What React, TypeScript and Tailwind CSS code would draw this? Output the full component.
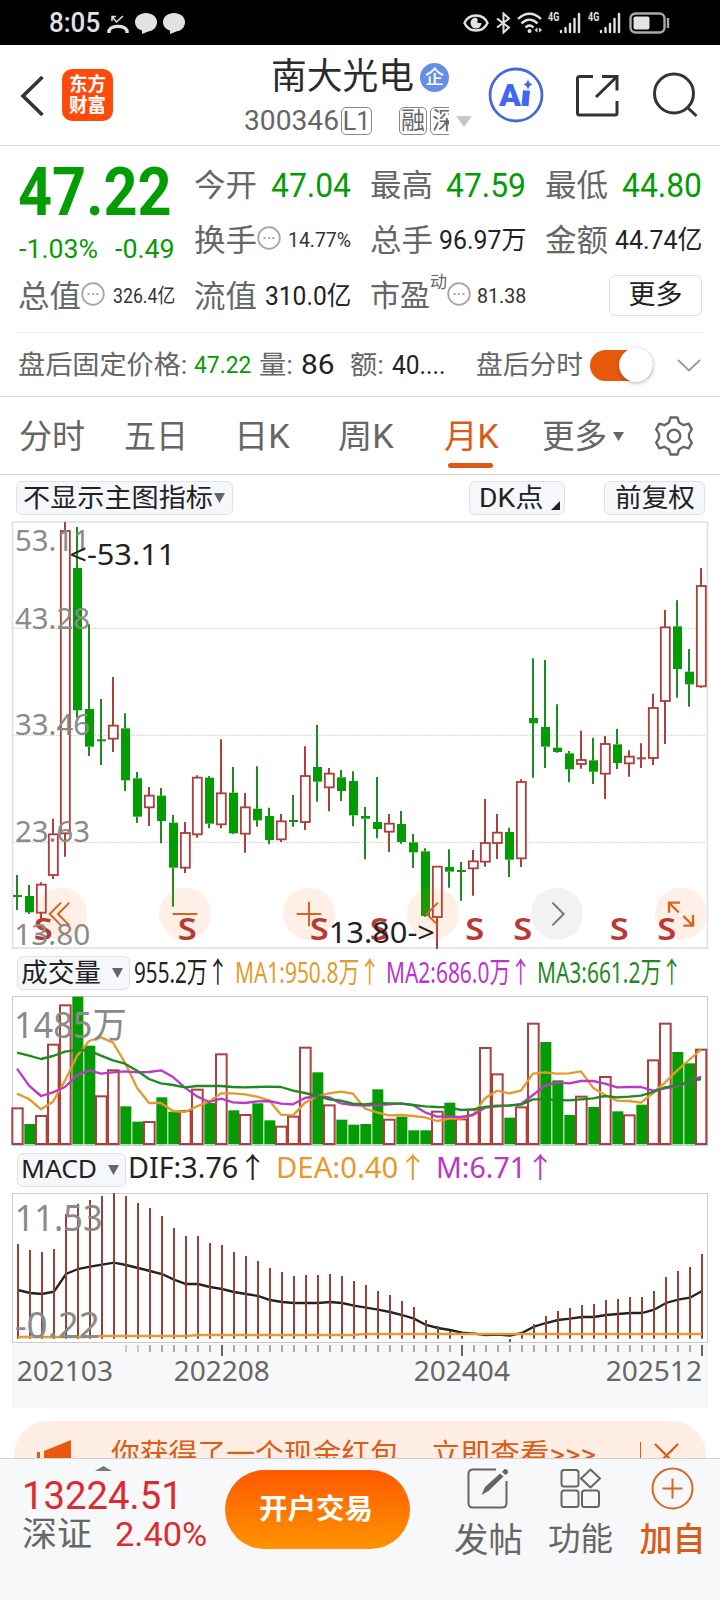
import { ReactNode, useLayoutEffect, useRef } from 'react';
import clsx from 'clsx';

type Tone = 'r' | 'g';
type Candle = [Tone, number, number, number, number];
type Volume = [Tone, number];

const RED = '#ac403c';
const GREEN = '#049c04';

// tone, high, body top, body bottom, low
const candles: Candle[] = [
  ['g', 1095, 1157, 1160, 1200], ['g', 1125, 1158, 1207, 1212], ['r', 1117, 1124, 1208, 1228], ['r', 926, 973, 1095, 1107],
  ['r', 36, 63, 970, 1040], ['g', 51, 174, 601, 623], ['g', 343, 597, 710, 738], ['g', 567, 690, 692, 765],
  ['r', 501, 647, 686, 726], ['g', 610, 655, 811, 843], ['g', 786, 805, 920, 939], ['r', 831, 857, 892, 948],
  ['g', 834, 857, 933, 1000], ['g', 915, 938, 1073, 1190], ['r', 936, 969, 1073, 1089], ['r', 796, 803, 973, 983],
  ['g', 798, 803, 941, 955], ['r', 688, 850, 943, 955], ['g', 771, 848, 970, 972], ['r', 849, 892, 971, 1028],
  ['g', 769, 896, 931, 950], ['g', 893, 918, 990, 1003], ['r', 912, 934, 988, 996], ['g', 855, 932, 934, 950],
  ['r', 709, 798, 936, 960], ['g', 645, 771, 815, 875], ['r', 774, 791, 832, 904], ['g', 780, 802, 843, 873],
  ['g', 784, 813, 916, 949], ['g', 891, 918, 926, 1048], ['g', 801, 936, 957, 985], ['r', 912, 941, 965, 1026],
  ['g', 903, 942, 996, 1001], ['g', 972, 997, 1027, 1074], ['g', 1015, 1024, 1218, 1220], ['r', 1068, 1070, 1221, 1317],
  ['g', 1018, 1071, 1085, 1133], ['g', 1056, 1082, 1084, 1172], ['r', 1020, 1054, 1075, 1157], ['r', 867, 999, 1055, 1070],
  ['r', 912, 968, 999, 1047], ['g', 953, 966, 1049, 1101], ['r', 808, 816, 1045, 1071], ['g', 445, 624, 640, 803],
  ['g', 450, 651, 710, 774], ['g', 583, 713, 726, 728], ['g', 723, 730, 778, 817], ['r', 662, 750, 762, 776],
  ['g', 683, 751, 785, 822], ['r', 678, 702, 791, 867], ['g', 657, 703, 759, 777], ['r', 721, 740, 760, 800],
  ['r', 700, 744, 745, 774], ['r', 551, 594, 744, 765], ['r', 300, 352, 573, 702], ['g', 271, 349, 477, 563],
  ['g', 417, 485, 523, 590], ['r', 174, 228, 529, 533],
];

const volumes: Volume[] = [
  ['r', 487], ['g', 537], ['r', 510], ['r', 296], ['r', 178], ['g', 155], ['g', 302], ['r', 451], ['r', 373], ['g', 484],
  ['g', 530], ['r', 528], ['g', 457], ['g', 500], ['r', 495], ['r', 431], ['g', 474], ['r', 325], ['g', 496], ['r', 507],
  ['g', 475], ['g', 526], ['r', 542], ['r', 512], ['r', 305], ['g', 382], ['r', 478], ['g', 524], ['g', 539], ['g', 537],
  ['g', 433], ['r', 521], ['g', 515], ['g', 556], ['g', 556], ['r', 497], ['g', 473], ['r', 520], ['r', 491], ['r', 306],
  ['r', 385], ['g', 518], ['r', 484], ['r', 233], ['g', 291], ['g', 406], ['g', 510], ['r', 452], ['g', 486], ['r', 393],
  ['g', 499], ['r', 508], ['g', 479], ['r', 343], ['r', 233], ['g', 321], ['g', 355], ['r', 311],
];

const ma1 = [446, 462, 493, 470, 407, 333, 288, 277, 293, 353, 428, 474, 474, 498, 501, 484, 470, 445, 445, 448, 455, 466, 509, 511, 473, 454, 445, 440, 446, 491, 502, 511, 510, 513, 517, 528, 521, 521, 509, 460, 437, 445, 437, 386, 382, 386, 385, 379, 428, 450, 467, 468, 473, 444, 413, 377, 345, 314];
const ma2 = [371, 422, 453, 442, 426, 391, 376, 386, 382, 379, 382, 381, 376, 396, 428, 454, 471, 461, 472, 474, 469, 468, 476, 478, 459, 453, 457, 475, 480, 482, 480, 478, 475, 480, 502, 515, 515, 516, 510, 488, 484, 482, 477, 450, 422, 412, 415, 408, 408, 416, 427, 426, 426, 437, 430, 424, 412, 395];
const ma3 = [323, 332, 342, 333, 320, 315, 317, 332, 346, 356, 377, 402, 415, 420, 427, 423, 423, 423, 426, 427, 426, 425, 426, 437, 444, 453, 463, 467, 476, 478, 474, 475, 476, 480, 484, 486, 487, 495, 493, 486, 482, 481, 479, 463, 463, 465, 466, 463, 460, 453, 457, 455, 452, 441, 427, 421, 410, 402];
const macd = [192, 210, 216, 207, 102, 71, 60, 48, 39, 48, 69, 84, 108, 144, 168, 168, 189, 195, 216, 228, 243, 264, 276, 288, 285, 285, 282, 288, 303, 315, 333, 345, 363, 381, 420, 438, 453, 468, 0, 0, 0, 0, 462, 432, 408, 393, 384, 375, 372, 360, 357, 351, 351, 333, 291, 273, 261, 222];
const dif = [330, 339, 342, 335, 282, 267, 260, 254, 248, 255, 264, 273, 282, 299, 312, 312, 321, 327, 336, 342, 348, 360, 366, 369, 369, 369, 366, 369, 377, 383, 389, 396, 405, 416, 435, 444, 450, 458, 461, 465, 464, 467, 459, 440, 429, 420, 416, 411, 411, 405, 402, 399, 399, 389, 369, 359, 353, 333];

const toPoints = (values: number[], start: number) => values.map((y, i) => `${start + i * 36},${y}`).join(' ');

// Squeezes or stretches one line of text to the width given by its class
function Fit({ className, children }: { className?: string; children: ReactNode }) {
  const outer = useRef<HTMLSpanElement>(null);
  const inner = useRef<HTMLSpanElement>(null);

  useLayoutEffect(() => {
    if (!outer.current || !inner.current) return;
    const ratio = outer.current.clientWidth / inner.current.offsetWidth;
    inner.current.style.transform = `scaleX(${ratio})`;
  }, [children]);

  return (
    <span ref={outer} className={clsx('block shrink-0 leading-none', className)}>
      <span ref={inner} className="inline-block origin-left whitespace-nowrap">{children}</span>
    </span>
  );
}

function ChartText({ x, end, y, size, fill = '#8a8a8a', children }: { x: number; end: number; y: number; size: number; fill?: string; children: string }) {
  return (
    <text x={x} y={y} textLength={end - x} lengthAdjust="spacingAndGlyphs" fontSize={size} fill={fill}>
      {children}
    </text>
  );
}

function Signal() {
  return (
    <svg className="h-[22px] w-[22px]" viewBox="0 0 22 22" stroke="#e2e2e2" strokeWidth="2.4" strokeLinecap="round">
      <path d="M2 19v1M6.5 16v4M11 12v8M15.500 7v13M20 2v18" />
    </svg>
  );
}

function StatusBar() {
  return (
    <div className="flex h-[45px] items-center bg-black pl-[49px] pr-[50px] text-[#e2e2e2]">
      <Fit className="mt-px w-[51px] text-[27px] font-medium">8:05</Fit>
      <svg className="ml-[7px] mt-[3px] h-[19px] w-[22px]" viewBox="0 0 22 19" fill="none" stroke="#e2e2e2" strokeWidth="2">
        <path d="M5 1.500 9.500 7 16 1M5 6V1.500h4" strokeWidth="1.500" />
        <path d="M2 18v-2.500C5 10 17 10 20 15.500V18" strokeWidth="3.400" />
      </svg>
      {[0, 1].map(i => (
        <svg key={i} className="ml-[6px] mt-px h-[21px] w-[22px]" viewBox="0 0 22 21" fill="#e2e2e2">
          <path d="M11 0c6 0 11 3.800 11 9s-4 9-8 9.200L7 21v-3.500C3 16.500 0 13 0 9 0 3.800 5 0 11 0Z" />
        </svg>
      ))}
      <svg className="ml-auto mt-px h-[20px] w-[26px]" viewBox="0 0 26 20" fill="none" stroke="#e2e2e2" strokeWidth="2.400">
        <path d="M1.500 10C6 0 20 0 24.500 10 20 20 6 20 1.500 10Z" />
        <path d="M13 4.500a5.500 5.500 0 1 0 5.500 5.500h-4V6Z" fill="#e2e2e2" stroke="none" />
      </svg>
      <svg className="ml-[7px] h-[22px] w-[15px]" viewBox="0 0 15 22" fill="none" stroke="#e2e2e2" strokeWidth="2">
        <path d="M1 6.500 13 15.500 7.500 20.500V1.500L13 6.500 1 15.500" />
      </svg>
      <svg className="ml-[6px] h-[22px] w-[26px]" viewBox="0 0 26 22" fill="none" stroke="#e2e2e2" strokeWidth="2.400">
        <path d="M1 7C8 0 17 0 24 7M4.500 11.500c5-5 11-5 16 0M8.500 15.500c2.500-2.500 5.500-2.500 8 0" />
        <circle cx="12.500" cy="19" r="2" fill="#e2e2e2" stroke="none" />
        <path d="M20.500 15.500v5l-3-2.500ZM22 15.500v5l3-2.500Z" fill="#e2e2e2" stroke="none" />
      </svg>
      <Fit className="mb-[12px] ml-[5px] w-[11px] text-[13px] font-bold">4G</Fit>
      <Signal />
      <Fit className="mb-[12px] ml-[7px] w-[11px] text-[13px] font-bold">4G</Fit>
      <Signal />
      <svg className="ml-[8px] h-[22px] w-[41px]" viewBox="0 0 41 22" fill="none" stroke="#a9a9a9" strokeWidth="2.400">
        <rect x="1.500" y="1.500" width="34" height="19" rx="5" />
        <rect x="4.500" y="4.500" width="16" height="13" rx="2" fill="#e2e2e2" stroke="none" />
        <path d="M39 6v10" />
      </svg>
    </div>
  );
}

function Header() {
  return (
    <div className="flex h-[101px] border-b border-[#d9d9d9] bg-white">
      <svg className="ml-[19px] mt-[30px] h-[42px] w-[26px]" viewBox="0 0 26 42" fill="none" stroke="#333" strokeWidth="3.600">
        <path d="M23.500 2 4 21l19.500 19" />
      </svg>
      <div className="ml-[17px] mt-[24px] flex h-[52px] w-[51px] flex-col items-center justify-center gap-[2px] rounded-[10px] bg-[#ff4a0a] text-[19px] font-bold text-white">
        <Fit className="w-[37px]">东方</Fit>
        <Fit className="w-[37px]">财富</Fit>
      </div>
      <div className="ml-[131px] w-[228px]">
        <div className="mt-[12px] flex h-[40px] items-center pl-[27px]">
          <Fit className="w-[143px] text-[36px] text-[#2b2b2b]">南大光电</Fit>
          <span className="ml-[6px] mt-px flex h-[29px] w-[29px] items-center justify-center rounded-full bg-[#658fe4] text-[19px] font-medium leading-none text-white">企</span>
        </div>
        <div className="mt-[8px] flex h-[32px] items-center text-[#666]">
          <Fit className="w-[95px] text-[27px]">300346</Fit>
          <span className="ml-[2px] flex h-[28px] w-[31px] items-center justify-center rounded-[5px] border border-[#888] text-[25px] leading-none">L1</span>
          <span className="ml-[27px] flex w-[50px] gap-[3px] overflow-hidden text-[24px] leading-none">
            <span className="flex h-[28px] w-[28px] shrink-0 items-center justify-center rounded-[5px] border border-[#888]">融</span>
            <span className="flex h-[28px] w-[28px] shrink-0 items-center justify-center rounded-[5px] border border-[#888]">深</span>
          </span>
          <svg className="ml-[7px] h-[11px] w-[16px] shrink-0" viewBox="0 0 16 11" fill="#c8c8c8"><path d="M0 0h16L8 11Z" /></svg>
        </div>
      </div>
      <svg className="ml-[16px] mt-[22px] h-[56px] w-[56px]" viewBox="0 0 56 56">
        <circle cx="28" cy="28" r="26" fill="#fff" stroke="#4668dc" strokeWidth="2.800" />
        <text x="11" y="39" fontSize="32" fontWeight="900" fill="#3f66f5" textLength="22" lengthAdjust="spacingAndGlyphs">A</text>
        <path d="M38.500 23.500 37 39" stroke="#3f66f5" strokeWidth="7" />
        <path d="M40 12q.8 4.500 4.500 5.500-3.700 1-4.500 5.500-.8-4.500-4.500-5.500 3.700-1 4.500-5.500Z" fill="#3f66f5" />
      </svg>
      <svg className="ml-[29px] mt-[28px] h-[46px] w-[46px]" viewBox="0 0 46 46" fill="none" stroke="#333" strokeWidth="3">
        <path d="M20 3.500H6.500q-2 0-2 2V40q0 2 2 2H42q2 0 2-2V28M23 24 43.500 4M29 3.500h15v14" />
      </svg>
      <svg className="ml-[33px] mt-[27px] h-[46px] w-[48px]" viewBox="0 0 48 46" fill="none" stroke="#333" strokeWidth="3">
        <circle cx="22" cy="21.500" r="19.500" />
        <path d="M35 35l9.500 9" />
      </svg>
    </div>
  );
}

function Info() {
  return (
    <svg className="mb-[5px] h-[24px] w-[24px] shrink-0" viewBox="0 0 24 24" fill="none" stroke="#a6a6a6" strokeWidth="1.800">
      <circle cx="12" cy="12" r="10.800" />
      <path d="M6.500 12h2M11 12h2M15.500 12h2" strokeWidth="2.200" />
    </svg>
  );
}

function Label({ children }: { children: string }) {
  return <Fit className="w-[63px] text-[31px] text-[#666]">{children}</Fit>;
}

function Quote() {
  return (
    <div className="bg-white px-[18px]">
      <div className="flex h-[186px] gap-[19px] pt-[9px]">
        <div className="flex w-[157px] flex-col text-[#049c04]">
          <div className="flex h-[75px] items-center pt-px">
            <Fit className="w-[154px] text-[66px] font-bold">47.22</Fit>
          </div>
          <div className="mt-[-1px] flex h-[40px] items-center justify-between text-[25px]">
            <Fit className="ml-px w-[79px]">-1.03%</Fit>
            <Fit className="w-[60px]">-0.49</Fit>
          </div>
          <div className="mt-px flex h-[52px] items-center">
            <Label>总值</Label>
            <Info />
            <Fit className="ml-auto w-[62px] text-[20px] text-[#333]">326.4亿</Fit>
          </div>
        </div>
        <div className="flex w-[157px] flex-col">
          <div className="flex h-[60px] items-center justify-between">
            <Label>今开</Label>
            <Fit className="w-[80px] text-[33px] text-[#049c04]">47.04</Fit>
          </div>
          <div className="flex h-[50px] items-center">
            <Label>换手</Label>
            <Info />
            <Fit className="ml-auto w-[63px] text-[20px] text-[#333]">14.77%</Fit>
          </div>
          <div className="mt-[5px] flex h-[52px] items-center justify-between">
            <Label>流值</Label>
            <Fit className="w-[86px] text-[26px] text-[#222]">310.0亿</Fit>
          </div>
        </div>
        <div className="flex w-[156px] flex-col">
          <div className="flex h-[60px] items-center justify-between">
            <Label>最高</Label>
            <Fit className="w-[80px] text-[33px] text-[#049c04]">47.59</Fit>
          </div>
          <div className="flex h-[50px] items-center justify-between">
            <Label>总手</Label>
            <Fit className="w-[87px] text-[26px] text-[#222]">96.97万</Fit>
          </div>
          <div className="mt-[5px] flex h-[52px] items-center">
            <Fit className="w-[60px] text-[30px] text-[#666]">市盈</Fit>
            <Fit className="mb-[28px] w-[17px] text-[17px] text-[#666]">动</Fit>
            <Info />
            <Fit className="ml-auto w-[49px] text-[20px] text-[#333]">81.38</Fit>
          </div>
        </div>
        <div className="flex w-[157px] flex-col">
          <div className="flex h-[60px] items-center justify-between">
            <Label>最低</Label>
            <Fit className="w-[80px] text-[33px] text-[#049c04]">44.80</Fit>
          </div>
          <div className="flex h-[50px] items-center justify-between">
            <Label>金额</Label>
            <Fit className="w-[87px] text-[26px] text-[#222]">44.74亿</Fit>
          </div>
          <div className="mt-[10px] flex h-[41px] w-[93px] items-center justify-center self-end rounded-[6px] border border-[#ddd]">
            <Fit className="w-[54px] text-[27px] text-[#222]">更多</Fit>
          </div>
        </div>
      </div>
      <div className="flex h-[64px] items-center border-t border-[#ebebeb] pt-px text-[#666]">
        <Fit className="w-[169px] text-[26.500px]">盘后固定价格:</Fit>
        <Fit className="ml-[7px] w-[57px] text-[24px] text-[#049c04]">47.22</Fit>
        <Fit className="ml-[8px] w-[34px] text-[26.500px]">量:</Fit>
        <Fit className="ml-[8px] w-[33px] text-[28px] text-[#222]">86</Fit>
        <Fit className="ml-[16px] w-[34px] text-[26.500px]">额:</Fit>
        <Fit className="ml-[8px] w-[53px] text-[25px] text-[#222]">40....</Fit>
        <Fit className="ml-auto w-[107px] text-[26.500px]">盘后分时</Fit>
        <div className="ml-[7px] flex h-[31px] w-[63px] items-center justify-end rounded-full bg-[#e8590c]">
          <div className="h-[34px] w-[34px] shrink-0 rounded-full bg-white shadow-[0_1px_4px_rgba(0,0,0,0.3)]" />
        </div>
        <svg className="ml-[24px] mr-[1px] h-[13px] w-[24px]" viewBox="0 0 24 13" fill="none" stroke="#999" strokeWidth="1.800"><path d="M1 1l11 10.500L23 1" /></svg>
      </div>
    </div>
  );
}

function Tabs() {
  return (
    <div className="flex h-[79px] items-center border-y border-[#d9d9d9] bg-white pl-[19px] pt-[2px] text-[33px] text-[#666]">
      <Fit className="w-[66px]">分时</Fit>
      <Fit className="ml-[39px] w-[64px]">五日</Fit>
      <Fit className="ml-[46px] w-[56px]">日K</Fit>
      <Fit className="ml-[48px] w-[56px]">周K</Fit>
      <div className="relative ml-[50px] text-[#dc5a14]">
        <Fit className="w-[55px]">月K</Fit>
        <span className="absolute -bottom-[15px] left-[4px] h-[5px] w-[45px] rounded-full bg-[#dc5a14]" />
      </div>
      <Fit className="ml-[43px] w-[65px]">更多</Fit>
      <svg className="ml-[6px] h-[9px] w-[11px]" viewBox="0 0 11 9" fill="#666"><path d="M0 0h11L5.500 9Z" /></svg>
      <svg className="mb-[2px] ml-[30px] h-[40px] w-[40px]" viewBox="0 0 40 40" fill="none" stroke="#666" strokeWidth="2.400" strokeLinejoin="round">
        <path d="M16.500 1.500h7l1.500 5 4.600 2.700 5-1.600 3.200 5.800-2.800 4.600v4l2.800 4.600-3.200 5.800-5-1.600-4.600 2.700-1.500 5h-7l-1.500-5-4.600-2.700-5 1.600-3.200-5.800L5 22v-4l-2.800-4.600 3.200-5.800 5 1.600 4.600-2.700Z" />
        <circle cx="20" cy="20" r="6.300" />
      </svg>
    </div>
  );
}

function Toolbar() {
  return (
    <div className="flex h-[46px] items-start bg-white pl-[16px] pt-[6px] text-[26px] text-[#222]">
      <div className="flex h-[34px] w-[217px] items-center rounded-[6px] border border-[#dfe2e6] bg-[#f6f7fa] pl-[6px]">
        <Fit className="w-[190px]">不显示主图指标</Fit>
        <svg className="ml-[1px] h-[10px] w-[11px]" viewBox="0 0 11 10" fill="#666"><path d="M0 0h11L5.500 10Z" /></svg>
      </div>
      <div className="ml-[236px] flex h-[34px] w-[96px] items-center rounded-[6px] border border-[#dfe2e6] bg-[#f6f7fa] pl-[9px]">
        <Fit className="w-[64px]">DK点</Fit>
        <svg className="ml-[8px] mt-[14px] h-[9px] w-[9px]" viewBox="0 0 9 9" fill="#222"><path d="M9 0v9H0Z" /></svg>
      </div>
      <div className="ml-[39px] flex h-[34px] w-[101px] items-center justify-center rounded-[6px] border border-[#dfe2e6] bg-[#f6f7fa]">
        <Fit className="w-[80px]">前复权</Fit>
      </div>
    </div>
  );
}

function PriceChart() {
  return (
    <svg className="block h-[429px] w-[720px] font-['Noto_Sans','Noto_Sans_CJK_SC',sans-serif]" viewBox="0 33 2160 1287">
      <rect x="37.500" y="36" width="2085" height="1278" fill="#fff" stroke="#e2e2e2" strokeWidth="5" />
      {[355, 676, 997].map(y => (
        <path key={y} d={`M40 ${y}H2120`} stroke="#ccc" strokeWidth="3" strokeDasharray="5 4" />
      ))}
      {candles.map(([tone, high, top, bottom, low], i) => {
        const x = 51 + i * 36;
        const color = tone === 'r' ? RED : '#1f8a1f';
        return (
          <g key={i}>
            <path d={`M${x} ${high}V${top}M${x} ${bottom}V${low}`} stroke={color} strokeWidth="6" />
            {bottom - top < 4 ? (
              <path d={`M${x - 12} ${top + 1}H${x + 15}`} stroke={color} strokeWidth="6" />
            ) : tone === 'r' ? (
              <rect x={x - 12.500} y={top} width="27" height={bottom - top} fill="#fff" stroke={RED} strokeWidth="5.500" />
            ) : (
              <rect x={x - 12} y={top} width="27" height={bottom - top} fill={GREEN} />
            )}
          </g>
        );
      })}

      {[183, 555, 927, 1299, 1671, 2043].map(x => (
        <circle key={x} cx={x} cy="1211" r="78" fill={x === 1671 ? '#888' : '#ff6a20'} fillOpacity="0.110" />
      ))}
      <g fill="none" stroke="#d9641f" strokeWidth="6">
        <path d="M183 1178l-34 34 34 34M208 1178l-34 34 34 34" />
        <path d="M518 1212h74M890 1212h74M927 1175v74" />
        <path d="M1314 1178l-34 34 34 34" />
        <path d="M2040 1178h-33v30M2008 1179l28 28M2050 1247h29v-32M2078 1246l-28-28" strokeWidth="7" />
      </g>
      <path d="M1657 1178l34 34-34 34" fill="none" stroke="#777" strokeWidth="6" />

      <g fontSize="93" fontWeight="600" fill="#b93a35">
        {[129, 561, 957, 1137, 1424, 1568, 1857, 2000].map(x => (
          <text key={x} x={x - 28} y="1289" textLength="57" lengthAdjust="spacingAndGlyphs">S</text>
        ))}
      </g>
      <ChartText x={45} end={270} y={123} size={87}>53.11</ChartText>
      <ChartText x={45} end={270} y={356} size={87}>43.28</ChartText>
      <ChartText x={45} end={270} y={675} size={87}>33.46</ChartText>
      <ChartText x={45} end={270} y={996} size={87}>23.63</ChartText>
      <ChartText x={43} end={271} y={1304} size={87}>13.80</ChartText>
      <ChartText x={208} end={526} y={165} size={87} fill="#222">{'<-53.11'}</ChartText>
      <ChartText x={986} end={1305} y={1299} size={87} fill="#222">{'13.80->'}</ChartText>
    </svg>
  );
}

function VolumeChart() {
  return (
    <svg className="block h-[150px] w-[720px] font-['Noto_Sans','Noto_Sans_CJK_SC',sans-serif]" viewBox="0 153 2160 450">
      <rect x="37.500" y="154.500" width="2085" height="447" fill="#fff" stroke="#ccc" strokeWidth="3" />
      {volumes.map(([tone, top], i) => {
        const x = 52 + i * 36;
        const left = Math.max(x - 16, 37);
        const right = Math.min(x + 16, 2119);
        return tone === 'r' ? (
          <rect key={i} x={left} y={top + 3} width={right - left} height={594 - top} fill="#fff" stroke={RED} strokeWidth="6" />
        ) : (
          <rect key={i} x={x - 15} y={top} width="33" height={598 - top} fill={GREEN} />
        );
      })}
      <g fill="none" strokeWidth="7" strokeLinejoin="round">
        <polyline points={toPoints(ma1, 51)} stroke="#e59a2e" />
        <polyline points={toPoints(ma2, 51)} stroke="#bb3ac4" />
        <polyline points={toPoints(ma3, 51)} stroke="#1f8a1f" />
      </g>
      <ChartText x={42} end={380} y={280} size={110}>1485万</ChartText>
    </svg>
  );
}

function MacdChart() {
  return (
    <svg className="block h-[150px] w-[720px] font-['Noto_Sans',sans-serif]" viewBox="0 39 2160 450">
      <rect x="37.500" y="40.500" width="2085" height="447" fill="#fff" stroke="#ccc" strokeWidth="3" />
      <polyline points={toPoints(dif, 54)} fill="none" stroke="#222" strokeWidth="7" />
      {macd.map((top, i) => top > 0 && (
        <path key={i} d={`M${54 + i * 36} ${top}V476`} stroke="#984038" strokeWidth="6" />
      ))}
      <path d="M1530 477v9" stroke="#1f8a1f" strokeWidth="6" />
      <path d="M54 471H250L300 468H560L595 465H1060L1090 462H2106" fill="none" stroke="#e39a34" strokeWidth="7" />
      <ChartText x={44} end={308} y={153} size={110}>11.53</ChartText>
      <ChartText x={44} end={300} y={474} size={110}>-0.22</ChartText>
    </svg>
  );
}

function TimeAxis() {
  return (
    <svg className="block h-[65px] w-[720px] font-['Noto_Sans',sans-serif]" viewBox="0 489 2160 195">
      <rect x="36" y="490" width="2088" height="194" fill="#f7f8fa" />
      {Array.from({ length: 49 }, (_, n) => n + 9).map(i => {
        const major = i === 17 || i === 37 || i === 57;
        return (
          <path key={i} d={`M${54 + i * 36} 495V${major ? 528 : 516}`} stroke={major ? '#666' : i < 11 ? '#ccc' : '#aaa'} strokeWidth="6" />
        );
      })}
      <ChartText x={50} end={339} y={603} size={83} fill="#666">202103</ChartText>
      <ChartText x={521} end={809} y={603} size={83} fill="#666">202208</ChartText>
      <ChartText x={1241} end={1530} y={603} size={83} fill="#666">202404</ChartText>
      <ChartText x={1817} end={2106} y={603} size={83} fill="#666">202512</ChartText>
    </svg>
  );
}

function Picker({ className, textClassName, children }: { className: string; textClassName: string; children: string }) {
  return (
    <div className={clsx('flex h-[34px] shrink-0 items-center justify-between rounded-[6px] border border-[#dfe2e6] bg-[#f6f7fa] pl-[3px] pr-[6px] text-[26px] text-[#222]', className)}>
      <Fit className={textClassName}>{children}</Fit>
      <svg className="h-[10px] w-[11px]" viewBox="0 0 11 10" fill="#666"><path d="M0 0h11L5.500 10Z" /></svg>
    </div>
  );
}

function BottomBar() {
  return (
    <div className="flex h-[142px] border-t border-[#d0d2d5] bg-[#f7f8fa]">
      <div className="w-[225px] pl-[22px]">
        <svg className="ml-[73px] mt-[7px] h-[5px] w-[17px]" viewBox="0 0 17 5" fill="#777"><path d="M0 5h17L8.500 0Z" /></svg>
        <div className="mt-[5px] flex h-[40px] items-center">
          <Fit className="w-[161px] text-[39px] text-[#dc2b30]">13224.51</Fit>
        </div>
        <div className="mt-[-1px] flex h-[38px] items-center">
          <Fit className="w-[70px] text-[34px] text-[#666]">深证</Fit>
          <Fit className="ml-[23px] w-[92px] text-[34px] text-[#dc2b30]">2.40%</Fit>
        </div>
      </div>
      <div className="mt-[11px] flex h-[79px] w-[185px] items-center justify-center rounded-full bg-gradient-to-b from-[#ff5800] to-[#ff9100]">
        <Fit className="mr-[3px] mt-px w-[114px] text-[28px] font-bold text-white">开户交易</Fit>
      </div>
      <div className="ml-[43px] flex w-[70px] flex-col items-center text-[#666]">
        <svg className="mt-[9px] h-[41px] w-[42px]" viewBox="0 0 42 41" fill="none" stroke="#666" strokeWidth="2">
          <path d="M29 1.500H6Q1.500 1.500 1.500 6v29q0 4.500 4.500 4.500h29q4.500 0 4.500-4.500V13" />
          <path d="M14.500 27l3.500-8L33 5.500l3.500 3L21.500 23Z" fill="#666" stroke="none" />
          <path d="M35 4l2.500-3q4 0 3.500 4l-2.500 2Z" fill="#666" stroke="none" />
        </svg>
        <Fit className="mt-[14px] w-[69px] text-[34px]">发帖</Fit>
      </div>
      <div className="ml-[24px] flex w-[66px] flex-col items-center text-[#666]">
        <svg className="mt-[9px] h-[41px] w-[41px]" viewBox="0 0 41 41" fill="none" stroke="#666" strokeWidth="2">
          <rect x="1.500" y="2" width="17" height="16.500" rx="2.500" />
          <rect x="1.500" y="22.500" width="17" height="16.500" rx="2.500" />
          <rect x="22" y="22.500" width="17" height="16.500" rx="2.500" />
          <path d="M30.500 1.500 40 10.500l-9.500 9-9.500-9Z" strokeLinejoin="round" />
        </svg>
        <Fit className="mt-[14px] w-[65px] text-[32px]">功能</Fit>
      </div>
      <div className="ml-[26px] flex w-[67px] flex-col items-center text-[#d95c18]">
        <svg className="mt-[8px] h-[43px] w-[43px]" viewBox="0 0 43 43" fill="none" stroke="#dc6428" strokeWidth="2">
          <circle cx="21.500" cy="21.500" r="20" />
          <path d="M11.500 21.500h20M21.500 11.500v20" />
        </svg>
        <Fit className="mt-[13px] w-[66px] text-[33px] font-medium">加自</Fit>
      </div>
    </div>
  );
}

export default function App() {
  return (
    <div className="h-[1600px] w-[720px] overflow-hidden bg-white font-['Roboto','Noto_Sans_CJK_SC',sans-serif]">
      <StatusBar />
      <Header />
      <Quote />
      <Tabs />
      <Toolbar />
      <PriceChart />

      <div className="flex h-[46px] items-center bg-white pl-[17px] font-['Noto_Sans','Noto_Sans_CJK_SC',sans-serif] text-[29px]">
        <Picker className="w-[113px]" textClassName="mb-[3px] w-[80px]">成交量</Picker>
        <Fit className="mb-[3px] ml-[4px] w-[94px] text-[#222]">955.2万↑</Fit>
        <Fit className="mb-[3px] ml-[7px] w-[145px] text-[#e59a2e]">MA1:950.8万↑</Fit>
        <Fit className="mb-[3px] ml-[6px] w-[145px] text-[#bb35c8]">MA2:686.0万↑</Fit>
        <Fit className="mb-[3px] ml-[6px] w-[145px] text-[#1f8a1f]">MA3:661.2万↑</Fit>
      </div>
      <VolumeChart />

      <div className="flex h-[47px] items-center bg-white pl-[17px] font-['Noto_Sans','Noto_Sans_CJK_SC',sans-serif] text-[28.500px]">
        <Picker className="w-[109px]" textClassName="mb-[3px] w-[76px]">MACD</Picker>
        <Fit className="mb-[4px] ml-[2px] w-[139px] text-[#222]">DIF:3.76↑</Fit>
        <Fit className="mb-[4px] ml-[9px] w-[152px] text-[#e59a2e]">DEA:0.40↑</Fit>
        <Fit className="mb-[4px] ml-[8px] w-[119px] text-[#bb35c8]">M:6.71↑</Fit>
      </div>
      <MacdChart />
      <TimeAxis />

      <div className="h-[50px] overflow-hidden bg-white px-[14px] pt-[13px]">
        <div className="flex h-[68px] items-center rounded-[34px] bg-[#fdede3] pl-[23px] text-[28px] text-[#d95c18]">
          <svg className="h-[30px] w-[36px]" viewBox="0 0 36 30" fill="#e8590c"><path d="M0 12h3v12H0ZM7 11 34 0v30L7 21Z" /></svg>
          <Fit className="ml-[38px] w-[288px]">你获得了一个现金红包</Fit>
          <Fit className="ml-[32px] w-[165px]">立即查看&gt;&gt;&gt;</Fit>
          <span className="ml-[44px] h-[26px] w-px bg-[#d95c18]" />
          <svg className="ml-[13px] h-[25px] w-[25px]" viewBox="0 0 25 25" fill="none" stroke="#d95c18" strokeWidth="2.200"><path d="M1 1l23 23M24 1 1 24" /></svg>
        </div>
      </div>
      <BottomBar />
    </div>
  );
}
